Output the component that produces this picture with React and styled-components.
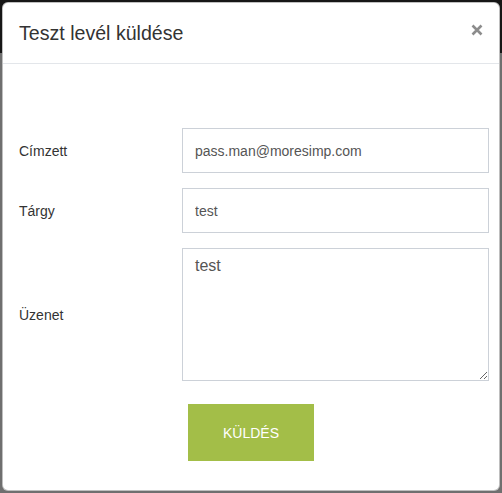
import React from "react";
import styled, { createGlobalStyle } from "styled-components";

const GlobalStyle = createGlobalStyle`
  html, body { margin: 0; padding: 0; }
  body {
    width: 502px;
    height: 493px;
    overflow: hidden;
    background: linear-gradient(to bottom, #161616 0, #161616 53px, #6f6f6f 53px, #6f6f6f 100%);
    font-family: "Liberation Sans", Arial, sans-serif;
  }
`;

const Modal = styled.div`
  box-sizing: border-box;
  margin: 2px;
  width: 498px;
  height: 489px;
  background: #fff;
  border: 1px solid rgba(0, 0, 0, 0.25);
  border-radius: 6px;
  display: flex;
  flex-direction: column;
`;

const Header = styled.div`
  display: flex;
  justify-content: space-between;
  align-items: flex-start;
  padding: 16px 16px 16px 16px;
  border-bottom: 1px solid #e3e6ea;
`;

const Title = styled.h4`
  margin: 0;
  font-family: "Liberation Sans", Arial, sans-serif;
  font-size: 19.6px;
  line-height: 28px;
  font-weight: normal;
  color: #333;
`;

const CloseButton = styled.button`
  border: 0;
  background: transparent;
  padding: 0;
  margin: 5px 0 0 0;
  width: 12px;
  height: 12px;
  display: flex;
  cursor: pointer;
  color: #8c8c8c;
`;

const Body = styled.form`
  display: grid;
  grid-template-columns: 163px 1fr;
  row-gap: 15px;
  align-items: center;
  padding: 64px 10px 0 16px;
`;

const Label = styled.label`
  font-size: 14px;
  color: #333;
  line-height: 20px;
`;

const Input = styled.input`
  box-sizing: border-box;
  width: 100%;
  height: 45px;
  border: 1px solid #ccd1d8;
  border-radius: 0;
  padding: 0 12px;
  font-family: "Liberation Sans", Arial, sans-serif;
  font-size: 14px;
  color: #555;
  outline: none;
  margin: 0;
`;

const TextArea = styled.textarea`
  box-sizing: border-box;
  width: 100%;
  height: 133px;
  border: 1px solid #ccd1d8;
  border-radius: 0;
  padding: 6px 12px;
  font-family: "Liberation Sans", Arial, sans-serif;
  font-size: 16px;
  line-height: 1.42857;
  color: #555;
  outline: none;
  margin: 0;
  display: block;
`;

const Actions = styled.div`
  grid-column: 2;
  padding: 8px 0 0 6px;
`;

const SendButton = styled.button`
  width: 126px;
  height: 57px;
  border: 0;
  border-radius: 0;
  background: #a3be48;
  color: #fff;
  font-family: "Liberation Sans", Arial, sans-serif;
  font-size: 14px;
  text-transform: uppercase;
  cursor: pointer;
`;

export default function App() {
  return (
    <>
      <GlobalStyle />
      <Modal>
        <Header>
          <Title>Teszt levél küldése</Title>
          <CloseButton type="button" aria-label="Close">
            <svg width="12" height="12" viewBox="0 0 12 12">
              <path d="M1.5 1.5 L10.5 10.5 M10.5 1.5 L1.5 10.5" stroke="currentColor" strokeWidth="2.6" strokeLinecap="butt" />
            </svg>
          </CloseButton>
        </Header>
        <Body onSubmit={(e) => e.preventDefault()}>
          <Label>Címzett</Label>
          <Input defaultValue="pass.man@moresimp.com" />
          <Label>Tárgy</Label>
          <Input defaultValue="test" />
          <Label>Üzenet</Label>
          <TextArea defaultValue="test" />
          <Actions>
            <SendButton type="submit">Küldés</SendButton>
          </Actions>
        </Body>
      </Modal>
    </>
  );
}
